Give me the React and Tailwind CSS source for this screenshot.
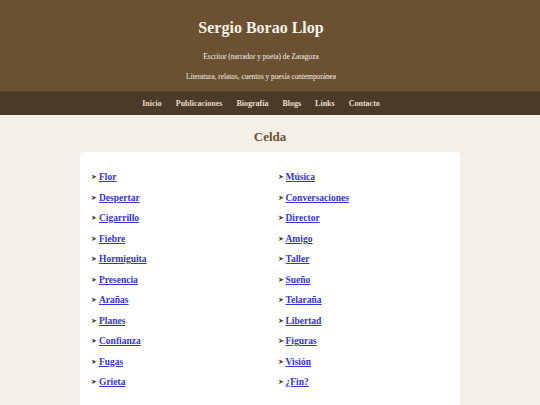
import React from 'react';

const left = ['Flor', 'Despertar', 'Cigarrillo', 'Fiebre', 'Hormiguita', 'Presencia', 'Arañas', 'Planes', 'Confianza', 'Fugas', 'Grieta'];
const right = ['Música', 'Conversaciones', 'Director', 'Amigo', 'Taller', 'Sueño', 'Telaraña', 'Libertad', 'Figuras', 'Visión', '¿Fin?'];
const nav = ['Inicio', 'Publicaciones', 'Biografía', 'Blogs', 'Links', 'Contacto'];

function Item({ label }) {
  return (
    <li className="flex items-center h-[20.5px]">
      <span className="text-[#5a4128] text-[6.5px] mr-[2px]">➤</span>
      <a href="#" className="text-[#3535d0] font-bold text-[9.5px] underline">{label}</a>
    </li>
  );
}

export default function App() {
  return (
    <div className="min-h-screen bg-[#f4f0e7]" style={{ fontFamily: '"Liberation Serif", Georgia, serif' }}>
      {/* Header */}
      <header className="bg-[#6b5131] text-[#f4f0e7] text-center h-[91px] pt-[16px] pr-[18px]">
        <h1 className="text-[16px] font-bold leading-[24px]">Sergio Borao Llop</h1>
        <p className="text-[7.3px] mt-[12px]">Escritor (narrador y poeta) de Zaragoza</p>
        <p className="text-[7.3px] mt-[9px]">Literatura, relatos, cuentos y poesía contemporánea</p>
      </header>

      {/* Nav */}
      <nav className="bg-[#4b3a28] h-[24px] flex items-center justify-center gap-[14px] border-t border-[#5a4630] pr-[18px]">
        {nav.map(n => (
          <a key={n} href="#" className="text-[#e8dcc8] font-bold text-[8px]">{n}</a>
        ))}
      </nav>

      <h2 className="text-center text-[#6b5131] font-bold text-[13px] mt-[13px] leading-[18px]">Celda</h2>

      {/* Card */}
      <div className="mx-[80px] mt-[6px] bg-white rounded-[4px] px-[11px] pt-[15px] pb-[20px]">
        <div className="grid grid-cols-2 gap-x-[15px]">
          <ul>
            {left.map(l => <Item key={l} label={l} />)}
          </ul>
          <ul>
            {right.map(r => <Item key={r} label={r} />)}
          </ul>
        </div>
      </div>
    </div>
  );
}
